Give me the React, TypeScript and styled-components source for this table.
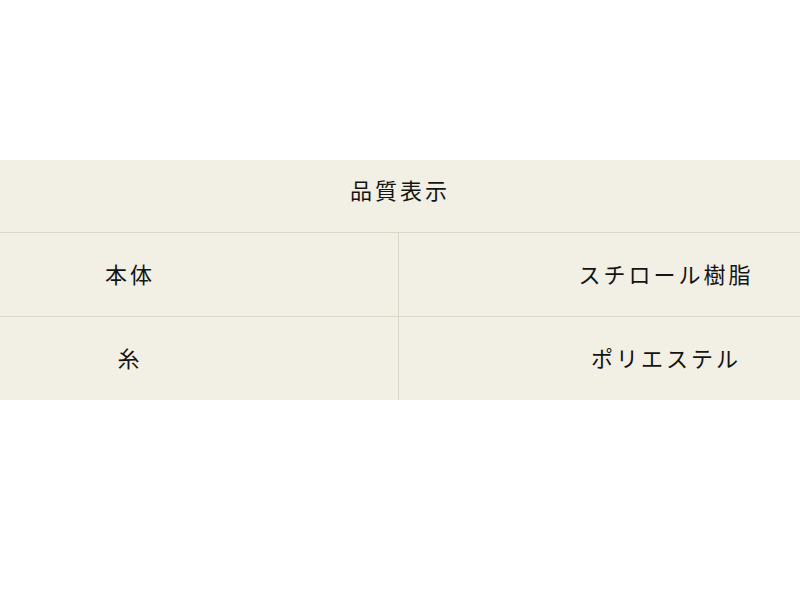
import React from 'react';
import styled, { createGlobalStyle } from 'styled-components';

// 品質表示の行データ
interface QualityRow {
  label: string;
  value: string;
}

const rows: QualityRow[] = [
  { label: '本体', value: 'スチロール樹脂' },
  { label: '糸', value: 'ポリエステル' }
];

const GlobalStyle = createGlobalStyle`
  html, body {
    margin: 0;
    padding: 0;
    background: #ffffff;
  }
  body {
    font-family: "Noto Sans CJK JP", "Noto Sans", sans-serif;
    color: #141414;
  }
`;

const Page = styled.div`
  padding-top: 160px;
  width: 800px;
`;

const Table = styled.div`
  background-color: #f2efe4;
  font-size: 22px;
  letter-spacing: 3px;
`;

const Caption = styled.div`
  height: 73px;
  padding-top: 14px;
  box-sizing: border-box;
  line-height: 30px;
  text-align: center;
  border-bottom: 1px solid #dcd8c8;
`;

const Row = styled.div<{ $last?: boolean }>`
  display: grid;
  grid-template-columns: 399px 1fr;
  height: ${({ $last }) => ($last ? '83px' : '84px')};
  border-bottom: ${({ $last }) => ($last ? 'none' : '1px solid #dcd8c8')};
  box-sizing: border-box;
`;

const Cell = styled.div<{ $side: 'left' | 'right' }>`
  display: flex;
  align-items: center;
  justify-content: center;
  line-height: 30px;
  padding-bottom: 3px;
  ${({ $side }) =>
    $side === 'left'
      ? 'padding-right: 138px; border-right: 1px solid #dcd8c8;'
      : 'padding-left: 133px;'}
`;

const App: React.FC = () => {
  return (
    <>
      <GlobalStyle />
      <Page>
        <Table>
          <Caption>品質表示</Caption>
          {rows.map((row, i) => (
            <Row key={row.label} $last={i === rows.length - 1}>
              <Cell $side="left">{row.label}</Cell>
              <Cell $side="right">{row.value}</Cell>
            </Row>
          ))}
        </Table>
      </Page>
    </>
  );
};

export default App;
